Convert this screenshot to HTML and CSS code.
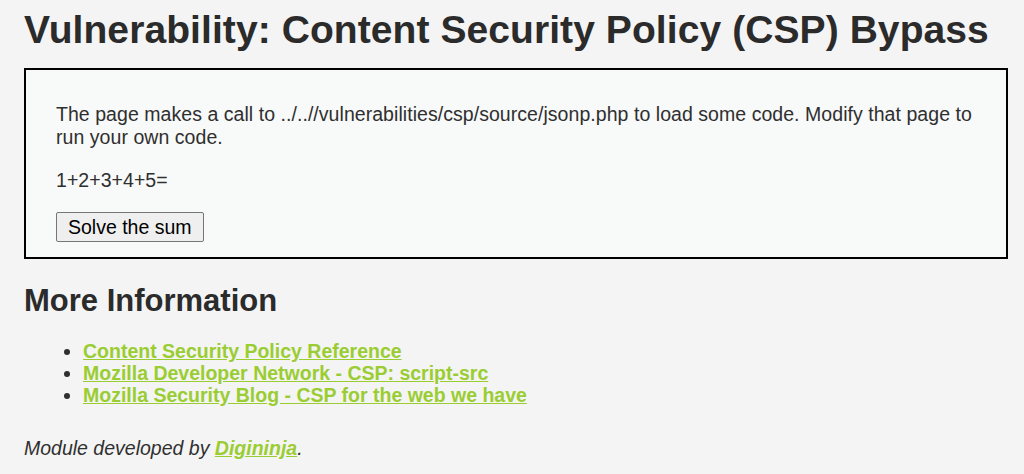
FILE: index.html
```html
<!DOCTYPE html>
<html>
<head>
<meta charset="utf-8">
<title>CSP Bypass</title>
<link rel="stylesheet" href="styles.css">
</head>
<body>
<div class="body_padded">
  <h1 class="title">Vulnerability: Content Security Policy (CSP) Bypass</h1>
  <div class="vulnerable_code_area">
    <p>The page makes a call to ../..//vulnerabilities/csp/source/jsonp.php to load some code. Modify that page to run your own code.</p>
    <p>1+2+3+4+5=<span id="answer"></span></p>
    <button class="solve" type="button">Solve the sum</button>
  </div>
  <h2 class="more">More Information</h2>
  <ul class="links">
    <li><a href="#">Content Security Policy Reference</a></li>
    <li><a href="#">Mozilla Developer Network - CSP: script-src</a></li>
    <li><a href="#">Mozilla Security Blog - CSP for the web we have</a></li>
  </ul>
  <p class="credit">Module developed by <a href="#">Digininja</a>.</p>
</div>
</body>
</html>
```

FILE: styles.css
```css
html, body {
  margin: 0;
  padding: 0;
  background: #f4f4f4;
}
body {
  font-family: "Liberation Sans", Arial, sans-serif;
  font-size: 19.5px;
  line-height: 22px;
  color: #2f2f2f;
}
.body_padded {
  padding: 0 16px 0 24px;
}
.title {
  margin: 0;
  padding-top: 8px;
  font-size: 39px;
  line-height: 44px;
  font-weight: bold;
  color: #2b2b2b;
  letter-spacing: 0.08px;
}
.vulnerable_code_area {
  margin-top: 16px;
  border: 2px solid #000;
  background: #f8f9f9;
  padding: 33px 30px 15px;
}
.vulnerable_code_area p {
  margin: 0 0 20px;
  line-height: 23px;
  letter-spacing: 0.05px;
}
.solve {
  display: block;
  font-family: "Liberation Sans", Arial, sans-serif;
  font-size: 19.5px;
  color: #000;
  background: #efefef;
  border: 1px solid #767676;
  border-radius: 2px;
  padding: 0 11px;
  height: 30px;
  line-height: 28px;
}
.more {
  margin: 24px 0 0;
  font-size: 31px;
  line-height: 36px;
  color: #2b2b2b;
}
.links {
  margin: 21px 0 0;
  padding-left: 59px;
  line-height: 22px;
}
.links a, .credit a {
  color: #9acd32;
  font-weight: bold;
}
.credit {
  margin: 31px 0 0;
  font-style: italic;
}
```
